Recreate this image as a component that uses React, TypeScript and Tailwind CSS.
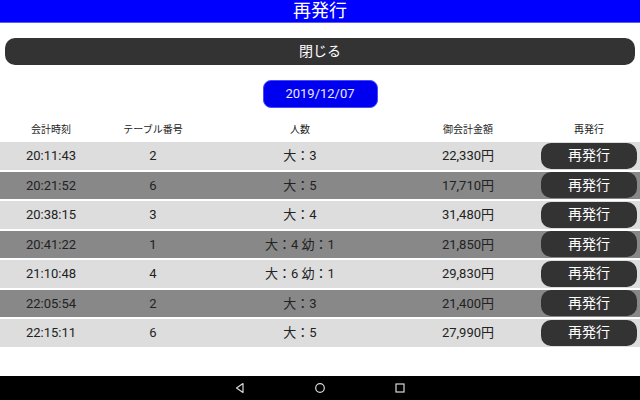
import React from "react";

const rows = [
  { t: "20:11:43", n: "2", p: "大：3", a: "22,330円" },
  { t: "20:21:52", n: "6", p: "大：5", a: "17,710円" },
  { t: "20:38:15", n: "3", p: "大：4", a: "31,480円" },
  { t: "20:41:22", n: "1", p: "大：4 幼：1", a: "21,850円" },
  { t: "21:10:48", n: "4", p: "大：6 幼：1", a: "29,830円" },
  { t: "22:05:54", n: "2", p: "大：3", a: "21,400円" },
  { t: "22:15:11", n: "6", p: "大：5", a: "27,990円" },
];

const font = { fontFamily: "Roboto, 'Noto Sans CJK JP', sans-serif" };

export default function App() {
  return (
    <div className="w-[640px] h-[400px] bg-white flex flex-col overflow-hidden" style={font}>
      <div className="h-[23px] bg-[#0000ff] border-b border-[#5a5aff] flex items-center justify-center text-white text-[18px] leading-none">
        再発行
      </div>
      <div className="px-[5px] pt-[15px]">
        <div className="h-[27px] rounded-[10px] bg-[#333333] flex items-center justify-center text-white text-[14px]">
          閉じる
        </div>
      </div>
      <div className="flex justify-center pt-[15px]">
        <div className="w-[115px] h-[28px] rounded-[8px] bg-[#0000f0] border border-[#4a4aff] flex items-center justify-center text-[#e8e8ff] text-[13px]">
          2019/12/07
        </div>
      </div>
      <div className="grid grid-cols-[102px_102px_192px_144px_100px] h-[34px] items-center text-[10px] text-[#222] pt-[9px]">
        <div className="text-center">会計時刻</div>
        <div className="text-center">テーブル番号</div>
        <div className="text-center">人数</div>
        <div className="text-center">御会計金額</div>
        <div className="text-center pr-[2px]">再発行</div>
      </div>
      <div className="flex flex-col gap-[2px]">
        {rows.map((r, i) => (
          <div
            key={i}
            className={`grid grid-cols-[102px_102px_192px_144px_100px] h-[27.5px] items-center text-[13px] text-[#222] ${
              i % 2 === 0 ? "bg-[#dddddd]" : "bg-[#888888]"
            }`}
          >
            <div className="text-center">{r.t}</div>
            <div className="text-center">{r.n}</div>
            <div className="text-center">{r.p}</div>
            <div className="text-center">{r.a}</div>
            <div className="pl-[1px]">
              <div className="w-[96px] h-[26px] rounded-[10px] bg-[#333333] flex items-center justify-center text-white text-[14px]">
                再発行
              </div>
            </div>
          </div>
        ))}
      </div>
      <div className="flex-1" />
      <div className="h-[24px] bg-black flex items-center justify-center gap-[68px]">
        <svg width="12" height="12" viewBox="0 0 12 12">
          <path d="M9 1.5 L2.5 6 L9 10.5 Z" fill="none" stroke="#d8d8d8" strokeWidth="1.2" strokeLinejoin="round" />
        </svg>
        <svg width="12" height="12" viewBox="0 0 12 12">
          <circle cx="6" cy="6" r="4.3" fill="none" stroke="#d8d8d8" strokeWidth="1.2" />
        </svg>
        <svg width="12" height="12" viewBox="0 0 12 12">
          <rect x="2" y="2" width="8" height="8" fill="none" stroke="#d8d8d8" strokeWidth="1.2" />
        </svg>
      </div>
    </div>
  );
}
